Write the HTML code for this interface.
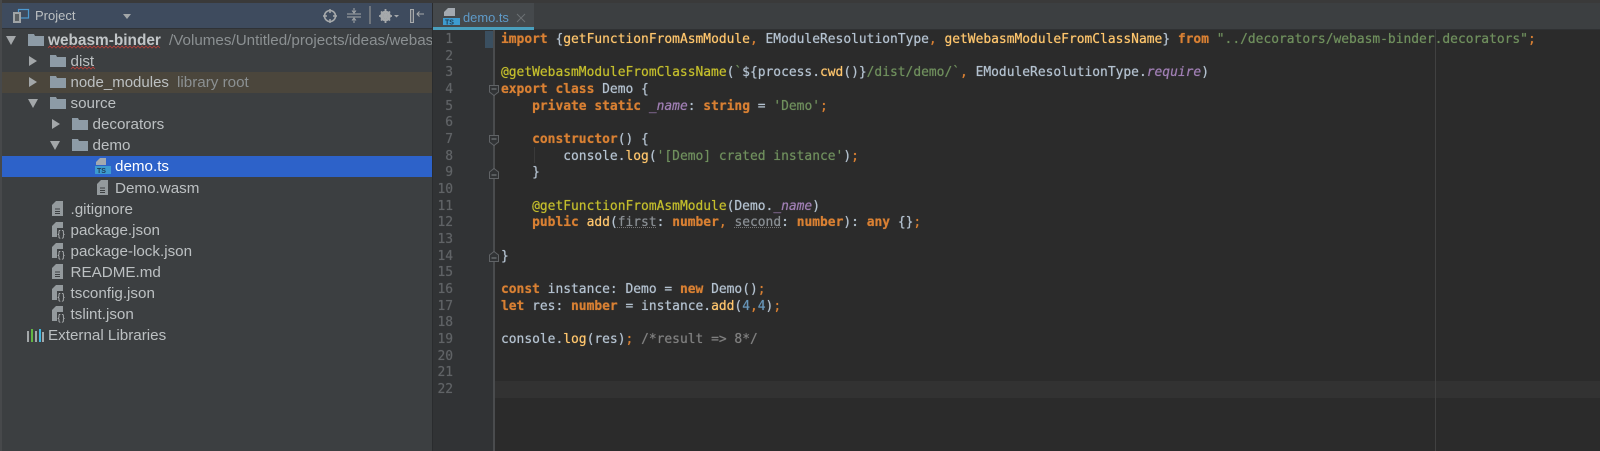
<!DOCTYPE html>
<html><head><meta charset="utf-8">
<style>
html,body{margin:0;padding:0;background:#2b2b2b}
#r{position:relative;width:1600px;height:451px;overflow:hidden;background:#2b2b2b;filter:blur(0.3px)}
.a{position:absolute}
.t{position:absolute;font:15.2px/21px "Liberation Sans",sans-serif;color:#bcc0c2;white-space:pre}
.g{color:#8b9092}
pre{margin:0;position:absolute;font:12.93px/16.67px "DejaVu Sans Mono",monospace;color:#b4c2d0;text-shadow:0 0 .6px currentColor}
.k{color:#d98033;font-weight:bold}
.f{color:#ffc66d}
.s{color:#6f8f5d}
.d{color:#c4be2c}
.p{color:#a07fb4;font-style:italic}
.n{color:#6897bb}
.c{color:#808080}
.o{color:#d98033}
svg{position:absolute;overflow:visible}
</style></head><body>
<div id="r">
<div class="a" style="left:0;top:0;width:1600px;height:3px;background:#3a3a3a"></div>
<div class="a" style="left:0;top:0;width:2px;height:451px;background:#47494b"></div>
<div class="a" style="left:2px;top:3px;width:430px;height:448px;background:#3c3f41"></div>
<div class="a" style="left:2px;top:3px;width:430px;height:25px;background:#3e4b5e"></div>
<div class="a" style="left:2px;top:28px;width:430px;height:1px;background:#2f3236"></div>
<div class="a" style="left:2px;top:71.5px;width:430px;height:21px;background:#4b463c"></div>
<div class="a" style="left:2px;top:156px;width:430px;height:21px;background:#2d62c9"></div>
<div class="a" style="left:432px;top:3px;width:1px;height:448px;background:#2a2c2e"></div>

<svg width="16" height="14" style="left:13px;top:9px"><rect x="5.5" y="0.5" width="10" height="8.5" fill="none" stroke="#4d9ad0" stroke-width="1.2"/><rect x="0" y="3" width="8" height="11" fill="#a0a4a6"/><rect x="2" y="5" width="4" height="7" fill="#5a5f62"/></svg>
<div class="t" style="left:35px;top:5px;font-size:13px">Project</div>
<svg width="8" height="5" style="left:123px;top:14px"><path d="M0 0H8L4 5Z" fill="#a3a7a9"/></svg>

<svg width="14" height="14" style="left:323px;top:9px"><circle cx="7" cy="7" r="5.5" fill="none" stroke="#a6a9ab" stroke-width="1.6"/><path d="M7 0V4M7 10V14M0 7H4M10 7H14" stroke="#a6a9ab" stroke-width="1.5"/></svg>
<svg width="14" height="15" style="left:347px;top:8px"><path d="M0 6H14M0 9H14" stroke="#a6a9ab" stroke-width="1"/><path d="M7 0V4M5 2.500L7 5L9 2.500M7 15V11M5 12.500L7 10L9 12.500" stroke="#a6a9ab" fill="none" stroke-width="1"/></svg>
<div class="a" style="left:369px;top:6px;width:2px;height:18px;background:#70767d"></div>
<svg width="21" height="14" style="left:379px;top:9px"><circle cx="6.500" cy="7" r="4" fill="none" stroke="#a6a9ab" stroke-width="2.600"/><path d="M6.500 0V14M0 7H13M2 2.500L11 11.500M11 2.500L2 11.500" stroke="#a6a9ab" stroke-width="1.800"/><path d="M15 6H20L17.500 8.500Z" fill="#a6a9ab"/></svg>
<svg width="14" height="14" style="left:410px;top:9px"><rect x="0.500" y="0.500" width="3" height="13" fill="#5c6470" stroke="#a6a9ab"/><path d="M14 5H7M9.500 2.500L7 5L9.500 7.500" stroke="#a6a9ab" fill="none" stroke-width="1"/></svg>

<svg width="10" height="9" style="left:6px;top:36px"><path d="M0 0H10L5 9Z" fill="#a3a7a9"/></svg>
<svg width="8" height="10" style="left:29px;top:56px"><path d="M0 0L8 5L0 10Z" fill="#a3a7a9"/></svg>
<svg width="8" height="10" style="left:29px;top:77px"><path d="M0 0L8 5L0 10Z" fill="#a3a7a9"/></svg>
<svg width="10" height="9" style="left:28px;top:99px"><path d="M0 0H10L5 9Z" fill="#a3a7a9"/></svg>
<svg width="8" height="10" style="left:52px;top:119px"><path d="M0 0L8 5L0 10Z" fill="#a3a7a9"/></svg>
<svg width="10" height="9" style="left:50px;top:141px"><path d="M0 0H10L5 9Z" fill="#a3a7a9"/></svg>

<svg width="16" height="12" style="left:28px;top:34px"><path d="M0 0H6L7 2H16V12H0Z" fill="#8d9ba6"/></svg>
<svg width="16" height="12" style="left:50px;top:55px"><path d="M0 0H6L7 2H16V12H0Z" fill="#8d9ba6"/></svg>
<svg width="16" height="12" style="left:50px;top:76px"><path d="M0 0H6L7 2H16V12H0Z" fill="#8d9ba6"/></svg>
<svg width="16" height="12" style="left:50px;top:97px"><path d="M0 0H6L7 2H16V12H0Z" fill="#8d9ba6"/></svg>
<svg width="16" height="12" style="left:72px;top:118px"><path d="M0 0H6L7 2H16V12H0Z" fill="#8d9ba6"/></svg>
<svg width="16" height="12" style="left:72px;top:139px"><path d="M0 0H6L7 2H16V12H0Z" fill="#8d9ba6"/></svg>

<div class="t" style="left:48px;top:29.500px;font-weight:bold;font-size:15.400px;color:#c2c6c8">webasm-binder</div>
<div class="t g" style="left:169px;top:29.500px;width:263px;overflow:hidden">/Volumes/Untitled/projects/ideas/webasm-binder</div>
<svg width="113" height="3" style="left:48px;top:46px"><path d="M0 2L2 0L4 2L6 0L8 2L10 0L12 2L14 0L16 2L18 0L20 2L22 0L24 2L26 0L28 2L30 0L32 2L34 0L36 2L38 0L40 2L42 0L44 2L46 0L48 2L50 0L52 2L54 0L56 2L58 0L60 2L62 0L64 2L66 0L68 2L70 0L72 2L74 0L76 2L78 0L80 2L82 0L84 2L86 0L88 2L90 0L92 2L94 0L96 2L98 0L100 2L102 0L104 2L106 0L108 2L110 0L112 2" fill="none" stroke="#b8403a" stroke-width=".8"/></svg>
<div class="t" style="left:70.500px;top:50.500px">dist</div>
<svg width="25" height="3" style="left:71px;top:67px"><path d="M0 2L2 0L4 2L6 0L8 2L10 0L12 2L14 0L16 2L18 0L20 2L22 0L24 2" fill="none" stroke="#b8403a" stroke-width=".8"/></svg>
<div class="t" style="left:70.500px;top:71.500px;font-size:15px">node_modules</div>
<div class="t g" style="left:177px;top:71.500px">library root</div>
<div class="t" style="left:70.500px;top:92.500px">source</div>
<div class="t" style="left:92.500px;top:113.500px">decorators</div>
<div class="t" style="left:92.500px;top:135px">demo</div>
<div class="t" style="left:115px;top:156px;color:#fff">demo.ts</div>
<div class="t" style="left:115px;top:177.500px">Demo.wasm</div>
<div class="t" style="left:70.500px;top:198.500px">.gitignore</div>
<div class="t" style="left:70.500px;top:219.500px">package.json</div>
<div class="t" style="left:70.500px;top:240.500px">package-lock.json</div>
<div class="t" style="left:70.500px;top:261.500px">README.md</div>
<div class="t" style="left:70.500px;top:282.500px">tsconfig.json</div>
<div class="t" style="left:70.500px;top:303.500px">tslint.json</div>
<div class="t" style="left:48px;top:325px">External Libraries</div>

<svg width="17" height="15" style="left:95px;top:158px"><path d="M5 0H11V7H1V4Z" fill="#a3a9b0"/><rect x="0" y="8" width="16" height="8" fill="#3d9bd0"/><text x="2" y="15" font-family="Liberation Sans,sans-serif" font-size="7" font-weight="bold" fill="#1f3b52">TS</text></svg>
<svg width="12" height="15" style="left:97px;top:180px"><path d="M4 0H11V15H0V4Z" fill="#949a9d"/><path d="M3 8H8M3 10.500H8M3 12.500H8" stroke="#3c3f41" stroke-width="1"/></svg>
<svg width="12" height="15" style="left:52px;top:201px"><path d="M4 0H11V15H0V4Z" fill="#949a9d"/><path d="M3 8H8M3 10.500H8M3 12.500H8" stroke="#3c3f41" stroke-width="1"/></svg>
<svg width="12" height="15" style="left:52px;top:264px"><path d="M4 0H11V15H0V4Z" fill="#949a9d"/><path d="M3 8H8M3 10.500H8M3 12.500H8" stroke="#3c3f41" stroke-width="1"/></svg>

<svg width="15" height="16" style="left:52px;top:222px"><path d="M4 0H11V15H0V4Z" fill="#949a9d"/><rect x="5" y="6" width="11" height="10" fill="#3c3f41"/><text x="5.500" y="14.500" font-family="Liberation Sans,sans-serif" font-size="9" fill="#c4c8ca" letter-spacing="1.200">{}</text></svg>
<svg width="15" height="16" style="left:52px;top:243px"><path d="M4 0H11V15H0V4Z" fill="#949a9d"/><rect x="5" y="6" width="11" height="10" fill="#3c3f41"/><text x="5.500" y="14.500" font-family="Liberation Sans,sans-serif" font-size="9" fill="#c4c8ca" letter-spacing="1.200">{}</text></svg>
<svg width="15" height="16" style="left:52px;top:285px"><path d="M4 0H11V15H0V4Z" fill="#949a9d"/><rect x="5" y="6" width="11" height="10" fill="#3c3f41"/><text x="5.500" y="14.500" font-family="Liberation Sans,sans-serif" font-size="9" fill="#c4c8ca" letter-spacing="1.200">{}</text></svg>
<svg width="15" height="16" style="left:52px;top:306px"><path d="M4 0H11V15H0V4Z" fill="#949a9d"/><rect x="5" y="6" width="11" height="10" fill="#3c3f41"/><text x="5.500" y="14.500" font-family="Liberation Sans,sans-serif" font-size="9" fill="#c4c8ca" letter-spacing="1.200">{}</text></svg>

<svg width="17" height="13" style="left:27px;top:329px"><rect x="0" y="2" width="2" height="11" fill="#a3a7a9"/><rect x="4" y="0" width="2" height="13" fill="#62b543"/><rect x="8" y="2" width="2" height="11" fill="#a3a7a9"/><rect x="12" y="0" width="2" height="13" fill="#40b6e0"/><rect x="15" y="3" width="2" height="10" fill="#a3a7a9"/></svg>

<div class="a" style="left:433px;top:3px;width:1167px;height:26px;background:#3c3f41"></div>
<div class="a" style="left:433px;top:29px;width:1167px;height:1px;background:#2f3133"></div>
<div class="a" style="left:433px;top:3px;width:101px;height:24px;background:#45494c"></div>
<div class="a" style="left:433px;top:27px;width:101px;height:3px;background:#4a9fbd"></div>
<svg width="17" height="17" style="left:443px;top:8px"><path d="M5 0H12V8H1V4Z" fill="#a3a9b0"/><rect x="0" y="10" width="17" height="7" fill="#3d9bd0"/><text x="2" y="16.500" font-family="Liberation Sans,sans-serif" font-size="7" font-weight="bold" fill="#1f3b52">TS</text></svg>
<div class="t" style="left:463px;top:6.500px;color:#5f9bc9;font-size:12.900px">demo.ts</div>
<svg width="8" height="8" style="left:517px;top:13.500px"><path d="M0 0L8 8M8 0L0 8" stroke="#6c7073" stroke-width="1"/></svg>

<div class="a" style="left:433px;top:30px;width:62px;height:421px;background:#313335"></div>
<div class="a" style="left:485px;top:30.500px;width:8px;height:17px;background:#3a4f60"></div>
<div class="a" style="left:493px;top:30px;width:2px;height:421px;background:#4a4c4e"></div>
<div class="a" style="left:495px;top:381px;width:1105px;height:16.500px;background:#323232"></div>
<div class="a" style="left:1435px;top:30px;width:1px;height:421px;background:#414141"></div>
<div class="a" style="left:534px;top:147px;width:1px;height:16px;background:#3a3a3a"></div>

<svg width="10" height="11" style="left:489px;top:85px"><path d="M.5.500H9.500V7L5 10.500L.5 7Z" fill="#313335" stroke="#606366"/><path d="M2.500 4H7.500" stroke="#808488"/></svg>
<svg width="10" height="11" style="left:489px;top:135px"><path d="M.5.500H9.500V7L5 10.500L.5 7Z" fill="#313335" stroke="#606366"/><path d="M2.500 4H7.500" stroke="#808488"/></svg>
<svg width="10" height="11" style="left:489px;top:168px"><path d="M.5 10.500H9.500V4L5 .5L.5 4Z" fill="#313335" stroke="#606366"/><path d="M2.500 7H7.500" stroke="#808488"/></svg>
<svg width="10" height="11" style="left:489px;top:251px"><path d="M.5 10.500H9.500V4L5 .5L.5 4Z" fill="#313335" stroke="#606366"/><path d="M2.500 7H7.500" stroke="#808488"/></svg>

<pre style="left:433px;top:32px;width:20px;text-align:right;color:#606366">1
2
3
4
5
6
7
8
9
10
11
12
13
14
15
16
17
18
19
20
21
22</pre>

<pre style="left:501px;top:32px"><span class="k">import</span> {<span class="f">getFunctionFromAsmModule</span><span class="o">,</span> EModuleResolutionType<span class="o">,</span> <span class="f">getWebasmModuleFromClassName</span>} <span class="k">from</span> <span class="s">"../decorators/webasm-binder.decorators"</span><span class="o">;</span>

<span class="d">@getWebasmModuleFromClassName</span>(<span class="s">`</span>${process.<span class="f">cwd</span>()}<span class="s">/dist/demo/`</span><span class="o">,</span> EModuleResolutionType.<span class="p">require</span>)
<span class="k">export class</span> Demo {
    <span class="k">private static</span> <span class="p">_name</span>: <span class="k">string</span> = <span class="s">'Demo'</span><span class="o">;</span>

    <span class="k">constructor</span>() {
        console.<span class="f">log</span>(<span class="s">'[Demo] crated instance'</span>)<span class="o">;</span>
    }

    <span class="d">@getFunctionFromAsmModule</span>(Demo.<span class="p">_name</span>)
    <span class="k">public</span> <span class="f">add</span>(<span style="color:#8a8f94;text-decoration:underline dotted #777;text-decoration-thickness:1px">first</span>: <span class="k">number</span><span class="o">,</span> <span style="color:#8a8f94;text-decoration:underline dotted #777;text-decoration-thickness:1px">second</span>: <span class="k">number</span>): <span class="k">any</span> {}<span class="o">;</span>

}

<span class="k">const</span> instance: Demo = <span class="k">new</span> Demo()<span class="o">;</span>
<span class="k">let</span> res: <span class="k">number</span> = instance.<span class="f">add</span>(<span class="n">4</span><span class="o">,</span><span class="n">4</span>)<span class="o">;</span>

console.<span class="f">log</span>(res)<span class="o">;</span> <span class="c">/*result =&gt; 8*/</span></pre>
</div>
</body></html>
